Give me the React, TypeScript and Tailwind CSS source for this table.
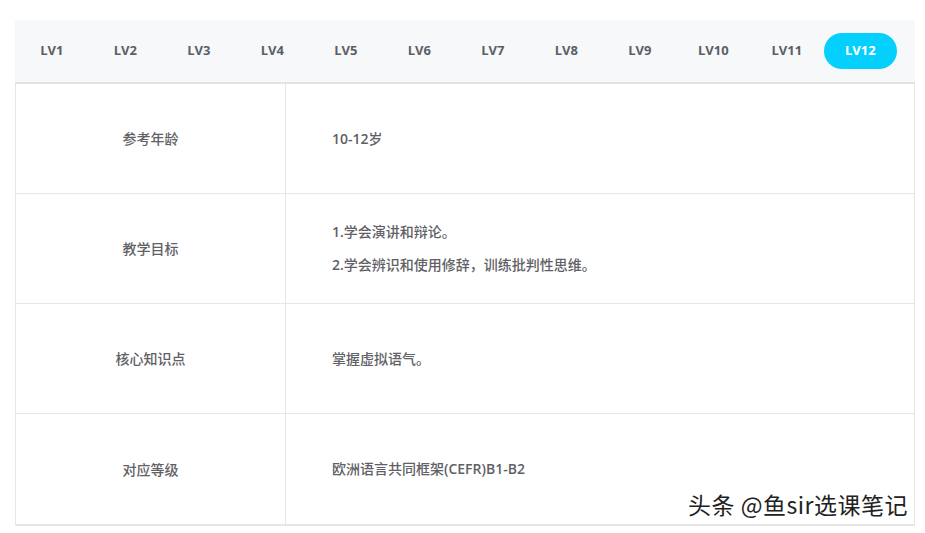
const levels = ['LV1', 'LV2', 'LV3', 'LV4', 'LV5', 'LV6', 'LV7', 'LV8', 'LV9', 'LV10', 'LV11', 'LV12'];

const rows = [
  { label: '参考年龄', lines: ['10-12岁'] },
  { label: '教学目标', lines: ['1.学会演讲和辩论。', '2.学会辨识和使用修辞，训练批判性思维。'] },
  { label: '核心知识点', lines: ['掌握虚拟语气。'] },
  { label: '对应等级', lines: ['欧洲语言共同框架(CEFR)B1-B2'] },
];

// latin runs are set heavier than the chinese text in the original
function Mixed({ text }: { text: string }) {
  const parts = text.split(/([A-Za-z0-9.\-()]+)/);
  return (
    <>
      {parts.map((part, i) =>
        /[A-Za-z0-9]/.test(part) ? (
          <span key={i} className="font-semibold">
            {part}
          </span>
        ) : (
          <span key={i}>{part}</span>
        ),
      )}
    </>
  );
}

export default function App() {
  const active = 'LV12';

  return (
    <div className="relative h-[533px] w-full bg-white pt-[20px] pl-[15px] font-['Open_Sans','Noto_Sans_CJK_SC',sans-serif]">
      <div className="w-[900px]">
        <div className="flex h-[64px] items-center border-b-2 border-[#e3e4e7] bg-[#f7f8fa]">
          {levels.map((lv) => (
            <div key={lv} className="flex w-[73.5px] justify-center">
              <span
                className={
                  lv === active
                    ? 'flex h-[36px] w-[75px] items-center justify-center rounded-full bg-[#05cffd] text-[13px] font-bold text-white'
                    : 'flex h-[36px] items-center text-[13px] font-bold text-[#5b5f66]'
                }
              >
                {lv}
              </span>
            </div>
          ))}
        </div>

        <div className="border-x border-b-2 border-[#e6e6e6]">
          {rows.map((row, i) => (
            <div
              key={row.label}
              className={`flex h-[110px] ${i < rows.length - 1 ? 'border-b border-[#e6e6e6]' : ''}`}
            >
              <div className="flex w-[270px] items-center justify-center border-r border-[#e6e6e6] text-[14px] font-medium text-[#5f6166] font-['Noto_Sans_CJK_SC',sans-serif]">
                {row.label}
              </div>
              <div className="flex flex-1 flex-col justify-center gap-[13px] pl-[46px] text-[14px] font-medium text-[#5f6166]">
                {row.lines.map((line) => (
                  <p key={line} className="leading-[20px]">
                    <Mixed text={line} />
                  </p>
                ))}
              </div>
            </div>
          ))}
        </div>
      </div>

      <div className="absolute left-[688px] top-[489px] text-[23px] leading-[30px] tracking-[0.5px] text-[#222] font-['Noto_Sans_CJK_SC',sans-serif] [text-shadow:1px_1px_0_#fff,-1px_-1px_0_#fff,1px_-1px_0_#fff,-1px_1px_0_#fff]">
        头条 @鱼sir选课笔记
      </div>
    </div>
  );
}
